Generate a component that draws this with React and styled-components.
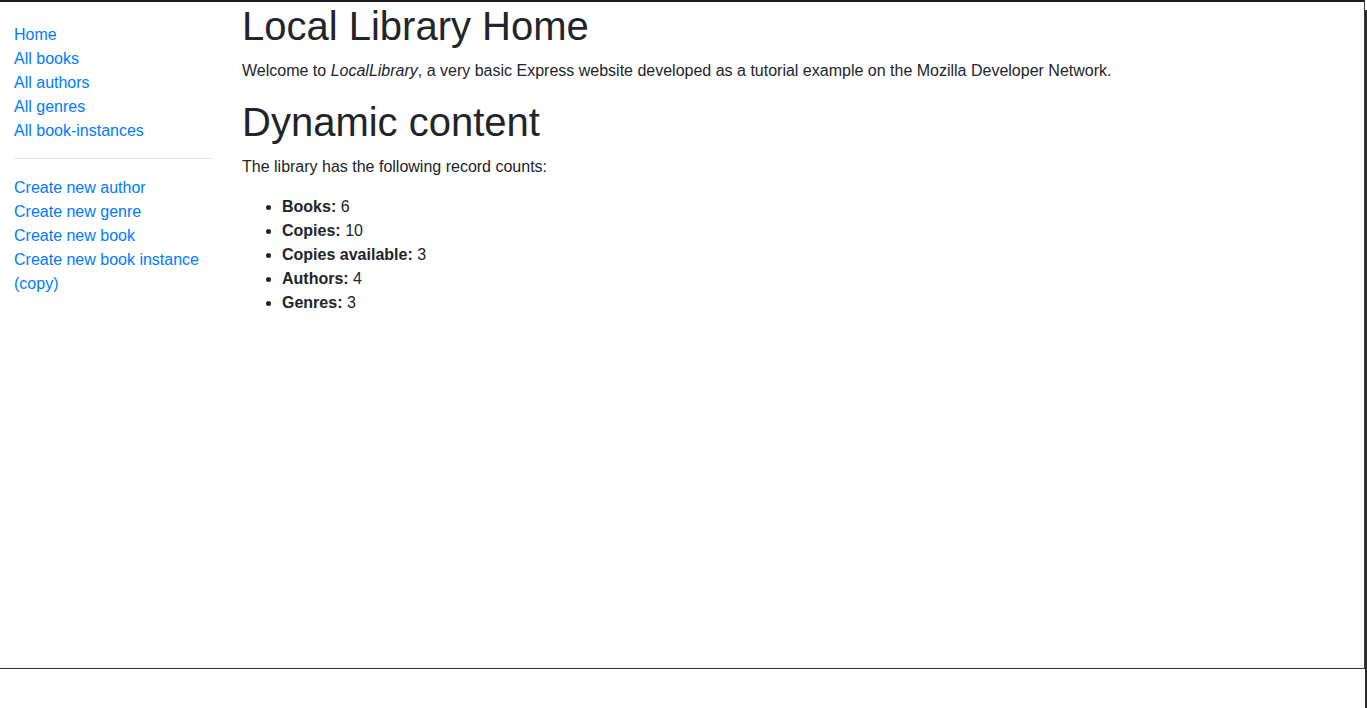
import React from "react"
import styled, { createGlobalStyle } from "styled-components"

const GlobalStyle = createGlobalStyle`
  html, body {
    margin: 0;
    padding: 0;
    background: #fff;
  }
  body {
    font-family: "Liberation Sans", Arial, sans-serif;
    font-size: 16px;
    line-height: 1.5;
    color: #212529;
  }
`

const Frame = styled.div`
  position: relative;
  box-sizing: border-box;
  width: 1365px;
  height: 669px;
  border-top: 2px solid #1e1e1e;
  border-right: 1px solid #3a3a3a;
  border-bottom: 1px solid #333;
  display: grid;
  grid-template-columns: 228px 1fr;
`

/* dark edge of the window on the right, over the page */
const WindowEdge = styled.div`
  position: fixed;
  top: 10px;
  right: 0;
  width: 2px;
  height: 698px;
  background: #2b2b2b;
`

const Sidebar = styled.nav`
  padding: 20px 15px 0 14px;
`

const NavList = styled.ul`
  list-style: none;
  margin: 0;
  padding: 1px 0 0;
`

const NavLink = styled.a`
  color: #007bff;
  text-decoration: none;

  &:hover {
    color: #0056b3;
    text-decoration: underline;
  }
`

const Rule = styled.hr`
  margin: 15px 0 16px;
  border: 0;
  border-top: 1px solid rgba(0, 0, 0, 0.1);
`

const Main = styled.main`
  padding: 0 15px 0 14px;
`

const Title = styled.h1`
  font-size: 40px;
  font-weight: 500;
  line-height: 1.2;
  margin: 0 0 8px;
`

const Text = styled.p`
  margin: 0 0 15px;
  padding-top: 1px;
`

const Counts = styled.ul`
  margin: 0 0 16px;
  padding: 1px 0 0 40px;
`

const sideLinks = ["Home", "All books", "All authors", "All genres", "All book-instances"]
const createLinks = [
  "Create new author",
  "Create new genre",
  "Create new book",
  "Create new book instance (copy)",
]

const counts = [
  ["Books:", 6],
  ["Copies:", 10],
  ["Copies available:", 3],
  ["Authors:", 4],
  ["Genres:", 3],
]

export default function App() {
  return (
    <>
      <GlobalStyle />
      <Frame>
        <Sidebar>
          <NavList>
            {sideLinks.map(l => (
              <li key={l}><NavLink href="#">{l}</NavLink></li>
            ))}
          </NavList>
          <Rule />
          <NavList>
            {createLinks.map(l => (
              <li key={l}><NavLink href="#">{l}</NavLink></li>
            ))}
          </NavList>
        </Sidebar>
        <Main>
          <Title>Local Library Home</Title>
          <Text>
            Welcome to <em>LocalLibrary</em>, a very basic Express website developed as a tutorial example on the Mozilla Developer Network.
          </Text>
          <Title>Dynamic content</Title>
          <Text>The library has the following record counts:</Text>
          <Counts>
            {counts.map(([label, n]) => (
              <li key={label}><strong>{label}</strong> {n}</li>
            ))}
          </Counts>
        </Main>
      </Frame>
      <WindowEdge />
    </>
  )
}
